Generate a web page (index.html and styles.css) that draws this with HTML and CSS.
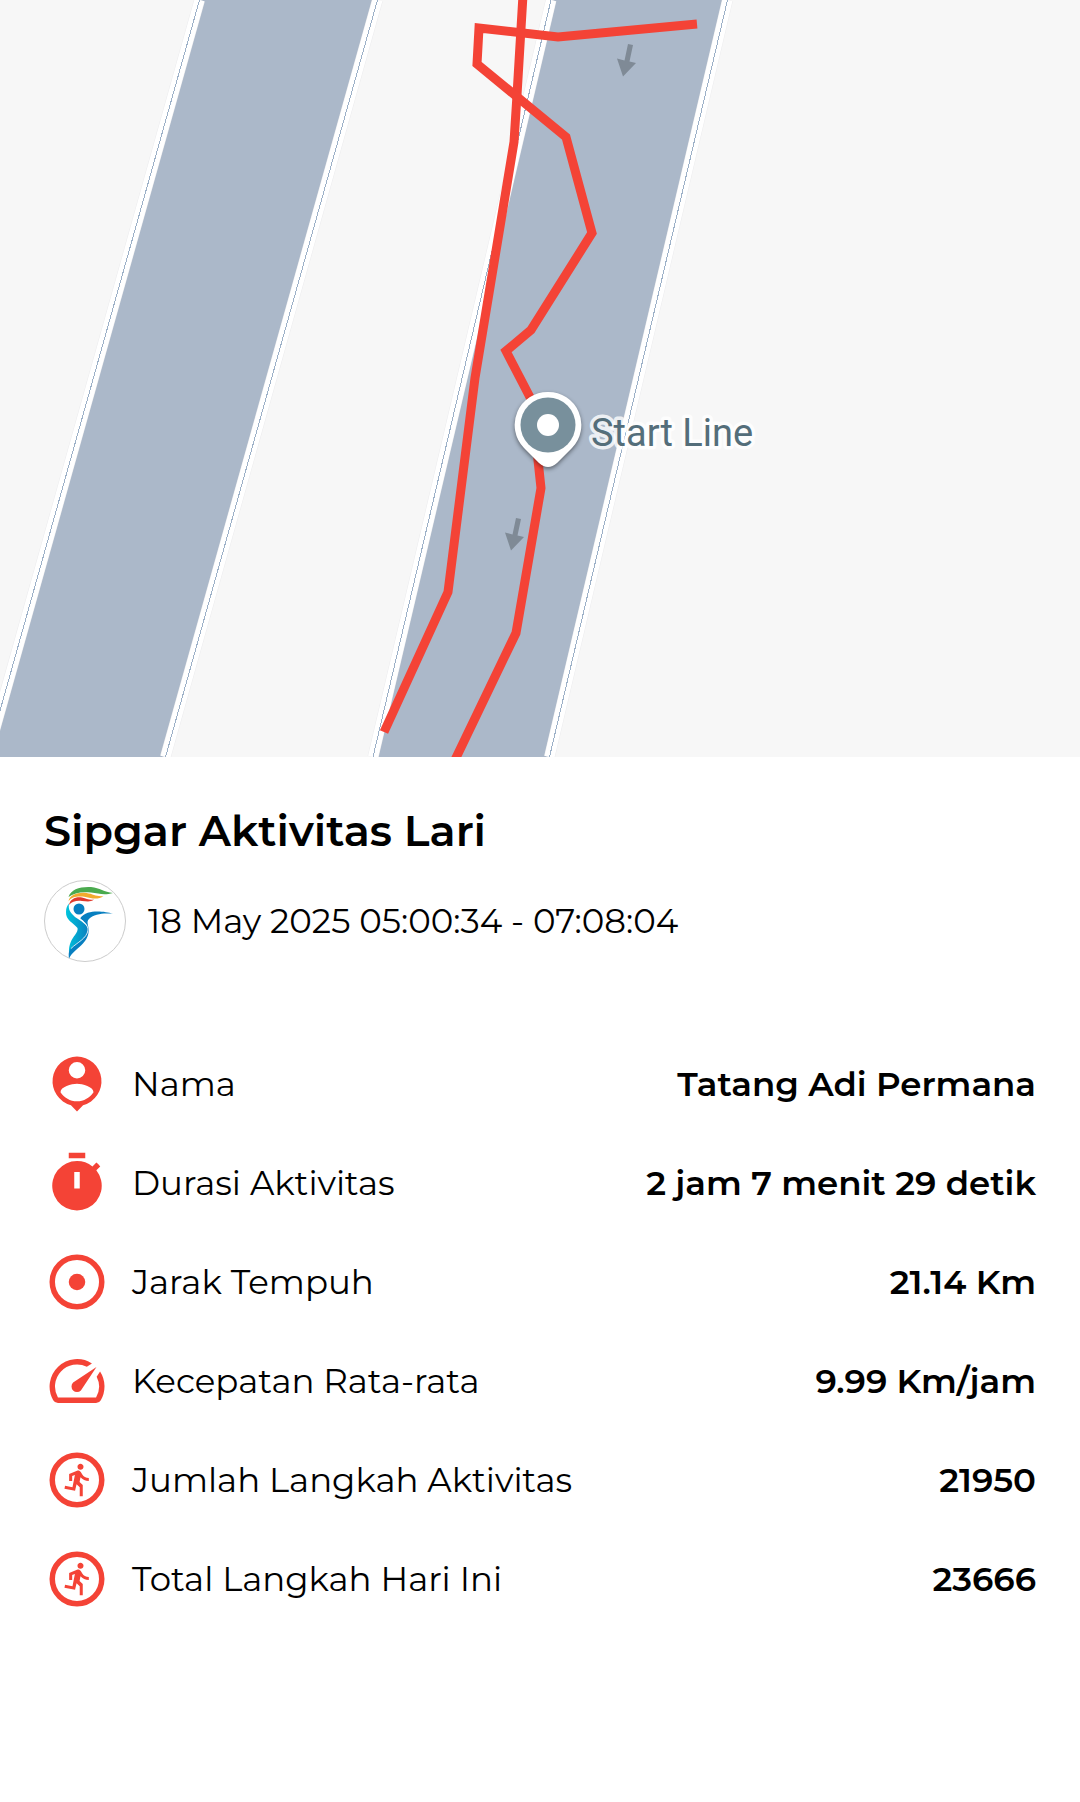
FILE: index.html
```html
<!DOCTYPE html>
<html lang="id">
<head>
<meta charset="utf-8">
<meta name="viewport" content="width=device-width, initial-scale=1">
<title>Sipgar Aktivitas Lari</title>
<link rel="stylesheet" href="styles.css">
</head>
<body>
<main class="page">
  <svg class="map" viewBox="0 0 1080 757" role="img" aria-label="Peta rute lari">
    <rect class="land" width="1080" height="757"/>
    <g class="road">
      <path class="surface" d="M199.500 0H377.500L165.500 757H-13Z"/>
      <path class="kerb-shade" d="M199.500 0L-13 757M377.500 0L165.500 757"/>
      <path class="kerb" d="M199.500 0L-13 757M377.500 0L165.500 757"/>
      <path class="kerb-line" d="M199.500 0L-13 757M377.500 0L165.500 757"/>
    </g>
    <g class="road">
      <path class="surface" d="M551 0H727.500L549.500 757H373Z"/>
      <path class="kerb-shade" d="M551 0L373 757M727.500 0L549.500 757"/>
      <path class="kerb" d="M551 0L373 757M727.500 0L549.500 757"/>
      <path class="kerb-line" d="M551 0L373 757M727.500 0L549.500 757"/>
    </g>
    <defs>
      <path id="arrow" d="M628 44l5 1-3.500 16.500 6.500 1.500-13 13.500-6-18 7.500 2z"/>
    </defs>
    <use class="arrow" href="#arrow"/>
    <use class="arrow" href="#arrow" x="-112" y="474"/>
    <path class="route" d="M523 -5L517 95L514 142L475 378L448 592L384 732"/>
    <path class="route" d="M697 24L558 37L479 28L477 64L566 137L592 233L531 330L506 351L533 403L538 460L541 488L516 633L454 762"/>
    <path class="pin" d="M548 392a33 33 0 0 0-24 56l15 15q9 8 18 0l15-15a33 33 0 0 0-24-56z"/>
    <circle class="pin-disc" cx="548" cy="425" r="27.500"/>
    <circle class="pin-dot" cx="548" cy="425" r="11"/>
    <text class="place" x="591" y="446">Start Line</text>
  </svg>

  <section class="details">
    <h1 class="title">Sipgar Aktivitas Lari</h1>
    <div class="when">
      <svg class="avatar" viewBox="0 0 82 82" aria-hidden="true">
        <defs>
          <linearGradient id="body" x1="0" x2="1"><stop offset="0" stop-color="#00c4dc"/><stop offset="1" stop-color="#0a7fbf"/></linearGradient>
        </defs>
        <circle cx="41" cy="41" r="40.500" fill="#fff" stroke="#ccc"/>
        <path fill="#4aaa4e" d="M24.500 17C27 9 36 6.500 47 7c9 1 13 5 22 6-9 2.500-14 .5-22-.5-9-1-17 0-22.500 4.500z"/>
        <path fill="#f2ab2e" d="M24.500 21.500c1-7 10-9.500 18-8.500 7 1 10 4 17 3-5 4-12 2.500-18 1-7-1-14-.5-17 4.500z"/>
        <path fill="#e0392d" d="M25 25c1-6 7-8.500 13-7.500 5 1 7 3 12 2-4 3-8 1.500-12 1.500-5-.5-10 0-13 4z"/>
        <circle cx="35" cy="29" r="5.500" fill="#087fc0"/>
        <path fill="url(#body)" d="M25 23.500c-1 6 1 9 6 13.500 6 4 13 8 13.500 13-1 8-12 13-19.500 23-.5-9 3-14 6-18 2-3 3-5 2.500-7-4-5-12-8-11.500-16 0-4 1-6 3-8.500z"/>
        <path fill="#087fc0" d="M36 38.500c4-6 11-7 17-7 7 0 11 1 16 2-8 0-16-.5-23 4.500-4 3-2 6-1.500 10 1 8-3 13-7 17-5 5-9 7-12.500 13.500-.5-5-.5-7 2-10 6-6 16-10 17-18.500 0-5-4-8.500-8-11.500z"/>
        <path fill="none" stroke="#fff" stroke-width=".8" d="M36 38.500c4 3 8 6.500 8 11.500-1 8.500-11 12.500-17 18.500"/>
      </svg>
      <time class="date">18 May 2025 05:00:34 - 07:08:04</time>
    </div>

    <dl class="stats">
      <div class="stat">
        <dt class="label">
          <svg class="icon" viewBox="0 0 24 24" aria-hidden="true"><path fill-rule="evenodd" d="M12 2a9 9 0 0 0-2.200 17.700L12 22l2.200-2.300A9 9 0 0 0 12 2zm0 2a3 3 0 1 1 0 6 3 3 0 0 1 0-6zm0 14.300c-2.500 0-4.700-1.300-6-3.300 0-2 4-3.100 6-3.100s6 1.100 6 3.100c-1.300 2-3.500 3.300-6 3.300z"/></svg>
          Nama
        </dt>
        <dd class="value">Tatang Adi Permana</dd>
      </div>
      <div class="stat">
        <dt class="label">
          <svg class="icon" viewBox="0 0 24 24" aria-hidden="true"><path fill-rule="evenodd" d="M15 1H9v2h6V1zm-4 13h2V8h-2v6zm8.030-6.610l1.420-1.420c-.43-.51-.9-.99-1.410-1.410l-1.420 1.420A8.960 8.960 0 0 0 12 4a9 9 0 1 0 7.030 3.390z"/></svg>
          Durasi Aktivitas
        </dt>
        <dd class="value">2 jam 7 menit 29 detik</dd>
      </div>
      <div class="stat">
        <dt class="label">
          <svg class="icon" viewBox="0 0 24 24" aria-hidden="true"><circle class="ring" cx="12" cy="12" r="9"/><circle cx="12" cy="12" r="3"/></svg>
          Jarak Tempuh
        </dt>
        <dd class="value">21.14 Km</dd>
      </div>
      <div class="stat">
        <dt class="label">
          <svg class="icon" viewBox="0 0 24 24" aria-hidden="true"><path d="M20.380 8.570l-1.230 1.850a8 8 0 0 1-.22 7.580H5.070A8 8 0 0 1 15.580 6.850l1.850-1.230A10 10 0 0 0 3.350 19a2 2 0 0 0 1.720 1h13.850a2 2 0 0 0 1.740-1 10 10 0 0 0-.27-10.440zm-9.790 6.840a2 2 0 0 0 2.830 0l5.660-8.490-8.490 5.660a2 2 0 0 0 0 2.830z"/></svg>
          Kecepatan Rata-rata
        </dt>
        <dd class="value">9.99 Km/jam</dd>
      </div>
      <div class="stat">
        <dt class="label">
          <svg class="icon" viewBox="0 0 24 24" aria-hidden="true"><g id="runner"><circle class="ring" cx="12" cy="12" r="9"/><path transform="translate(5.850 5.270) scale(.55)" d="M13.490 5.480c1.100 0 2-.9 2-2s-.9-2-2-2-2 .9-2 2 .9 2 2 2zm-3.600 13.900l1-4.400 2.100 2v6h2v-7.500l-2.100-2 .6-3c1.300 1.500 3.300 2.500 5.500 2.500v-2c-1.900 0-3.500-1-4.300-2.400l-1-1.600c-.4-.6-1-1-1.700-1-.3 0-.5.1-.8.1l-5.200 2.200v4.700h2v-3.400l1.800-.7-1.600 8.100-4.900-1-.4 2 7 1.400z"/></g></svg>
          Jumlah Langkah Aktivitas
        </dt>
        <dd class="value">21950</dd>
      </div>
      <div class="stat">
        <dt class="label">
          <svg class="icon" viewBox="0 0 24 24" aria-hidden="true"><use href="#runner"/></svg>
          Total Langkah Hari Ini
        </dt>
        <dd class="value">23666</dd>
      </div>
    </dl>
  </section>
</main>
</body>
</html>
```
FILE: styles.css
```css
* {
  box-sizing: border-box;
}

body {
  margin: 0;
  background: #fff;
  color: #000;
  font-family: Montserrat, Inter, sans-serif;
}

.map {
  display: block;
  width: 100%;
  height: auto;
}

.land {
  fill: #f7f7f7;
}

.surface {
  fill: #abb8c9;
}

.kerb-shade,
.kerb,
.kerb-line {
  fill: none;
}

.kerb-shade {
  stroke: #ececee;
  stroke-width: 11px;
}

.kerb {
  stroke: #fff;
  stroke-width: 10px;
}

.kerb-line {
  stroke: #9db1c8;
  stroke-width: 1px;
  shape-rendering: crispEdges;
}

.arrow {
  fill: #7f8a96;
}

.route {
  fill: none;
  stroke: #f44336;
  stroke-width: 9px;
}

.pin {
  fill: #fff;
  filter: drop-shadow(0 2px 2px rgb(0 0 0 / 45%));
}

.pin-disc {
  fill: #78909c;
}

.pin-dot {
  fill: #fff;
}

.place {
  font-family: Roboto, sans-serif;
  font-size: 38px;
  fill: #546e7a;
  stroke: rgb(255 255 255 / 80%);
  stroke-width: 7px;
  stroke-linejoin: round;
  paint-order: stroke;
}

.details {
  padding: 48px 44px;
}

.title {
  margin: 0;
  font-size: 43px;
  line-height: 52px;
  font-weight: 600;
}

.when {
  display: flex;
  align-items: center;
  gap: 22px;
  margin-top: 23px;
}

.avatar {
  flex: none;
  width: 82px;
  height: 82px;
}

.date {
  font-size: 34px;
  line-height: 44px;
  font-weight: 400;
}

.stats {
  display: grid;
  gap: 33px;
  margin: 89px 0 0;
}

.stat {
  display: flex;
  align-items: center;
  justify-content: space-between;
  gap: 24px;
  font-size: 34px;
  line-height: 44px;
}

.label {
  display: flex;
  align-items: center;
  gap: 22px;
  font-weight: 400;
}

.icon {
  flex: none;
  width: 66px;
  height: 66px;
  fill: #f44336;
}

.ring {
  fill: none;
  stroke: #f44336;
  stroke-width: 2px;
}

.value {
  margin: 0;
  font-weight: 600;
  text-align: right;
}
```
